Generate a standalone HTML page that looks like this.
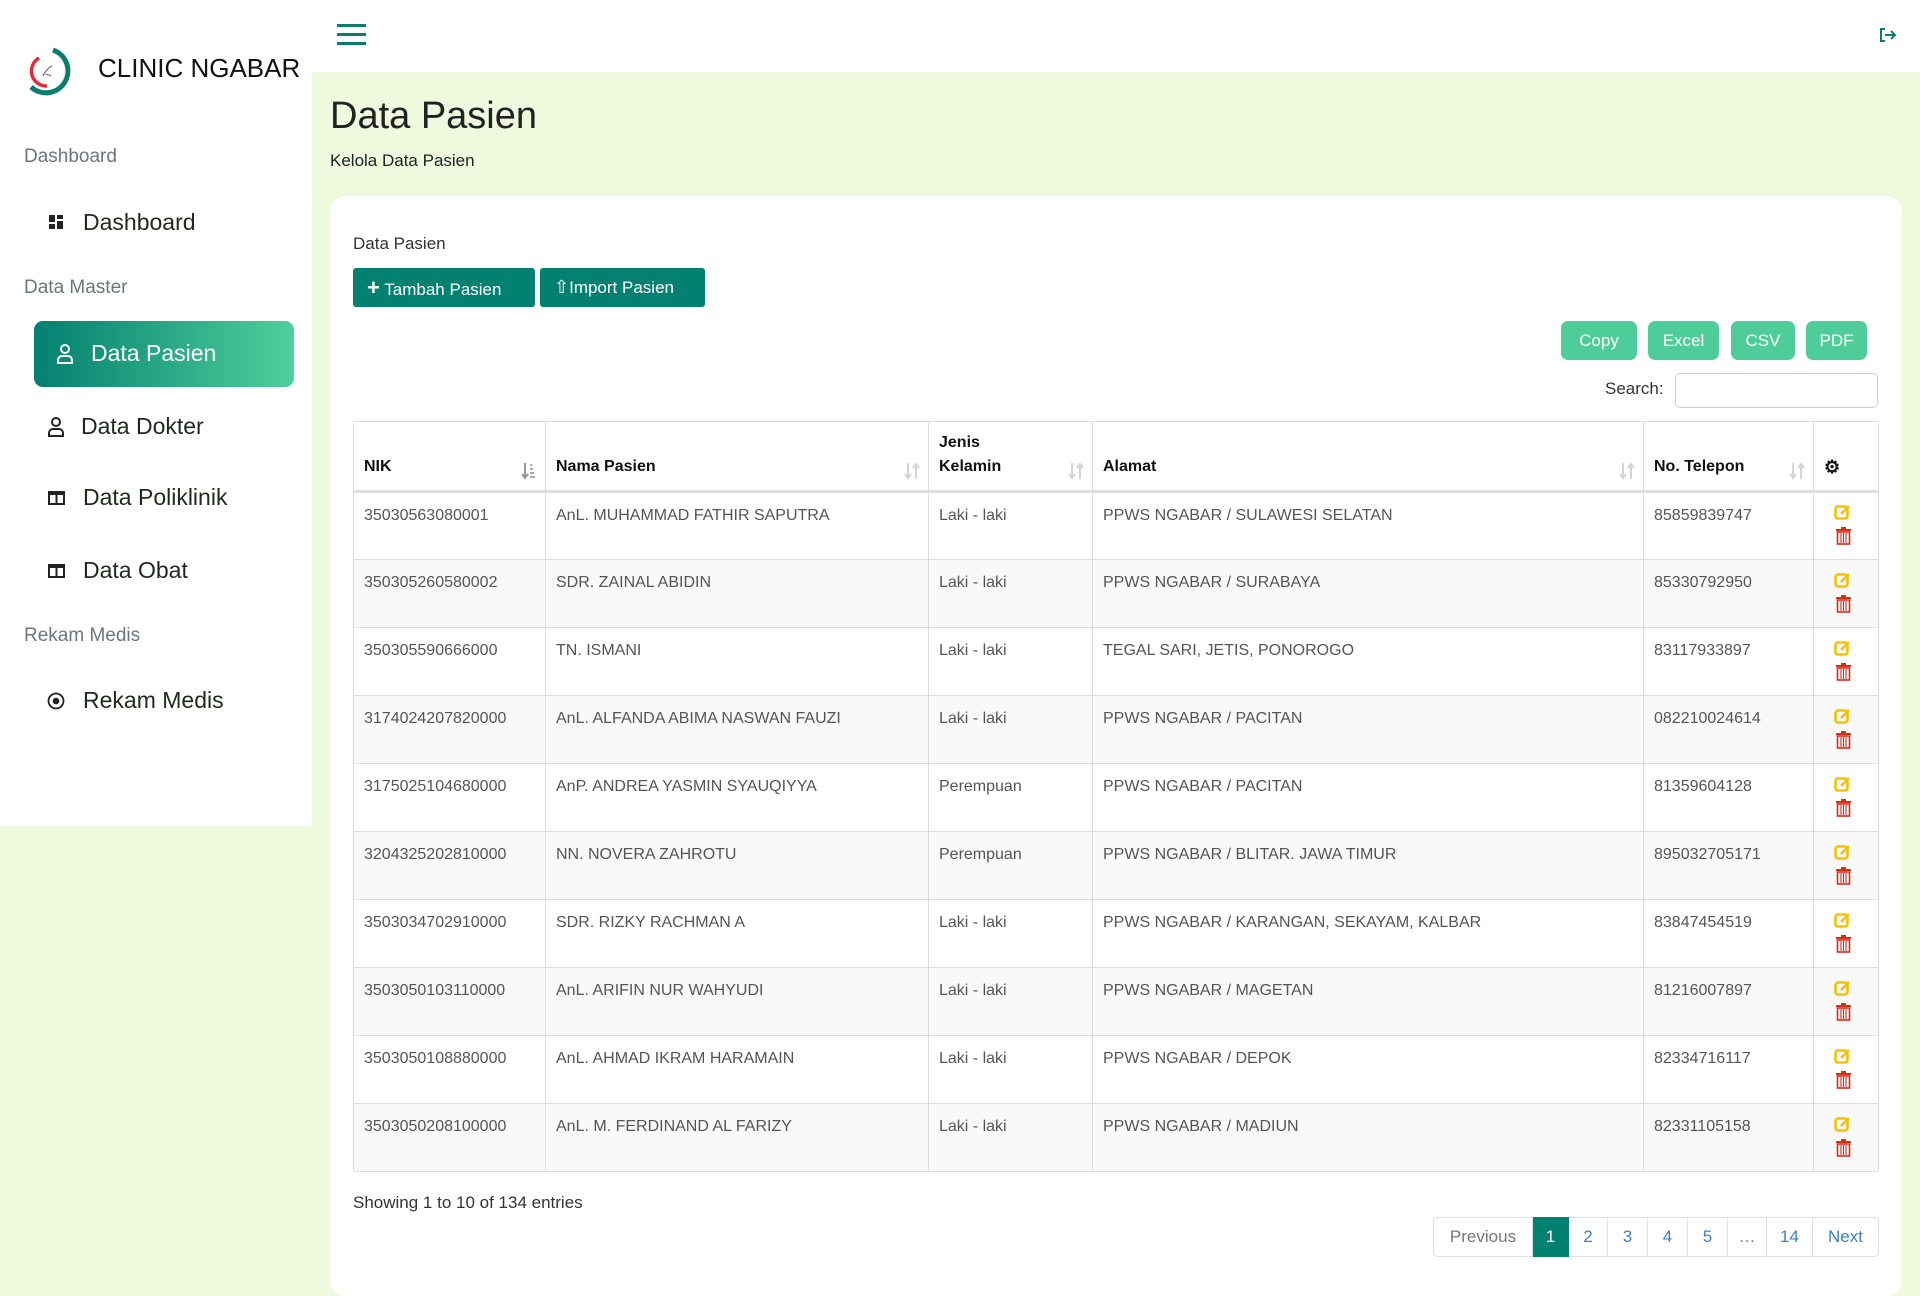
<!DOCTYPE html>
<html><head><meta charset="utf-8"><style>
*{box-sizing:border-box;margin:0;padding:0}
body{width:1920px;height:1290px;background:#eff9de;font-family:"Liberation Sans",sans-serif;position:relative;overflow:hidden;color:#212529}
.abs{position:absolute}
#top{left:0;top:0;width:1920px;height:72px;background:#fff}
#side{left:0;top:0;width:312px;height:826px;background:#fff}
.lbl{position:absolute;left:24px;font-size:19px;color:#6c757d}
.it{position:absolute;font-size:23px;color:#1d2a1d;white-space:nowrap}
.it svg{position:absolute;left:-36px;top:4px}
#card{left:330px;top:196px;width:1572px;height:1100px;background:#fff;border-radius:16px}
.btn{position:absolute;top:268px;height:39px;background:#028171;color:#fff;font-size:17px;border-radius:3px;line-height:39px;padding-left:14px}
.eb{position:absolute;top:321px;height:39px;background:#4ecd9a;color:#fff;font-size:17px;border-radius:7px;line-height:39px;text-align:center}
table{position:absolute;left:353px;top:421px;width:1525px;border-collapse:collapse;table-layout:fixed;font-size:16px}
th{height:70px;text-align:left;vertical-align:bottom;padding:0 10px 11px;font-weight:bold;border-right:1px solid #ddd;border-top:1px solid #ddd;border-bottom:3px solid #ddd;position:relative;color:#111;line-height:24px}
td{height:68px;vertical-align:top;padding:14px 10px 0;border-right:1px solid #ddd;border-bottom:1px solid #ddd;color:#555;white-space:nowrap}
tr:nth-child(odd) td{background:#f9f9f9}
td:first-child,th:first-child{border-left:1px solid #ddd}
.srt{position:absolute;right:8px;bottom:10px}
.pg{position:absolute;top:1217px;height:40px;border:1px solid #dee2e6;border-left:none;text-align:center;line-height:38px;font-size:17px;color:#3f7fbf}
</style></head><body>
<div id="top" class="abs"></div>
<div id="side" class="abs"></div>
<svg class="abs" style="left:21px;top:46px" width="50" height="50" viewBox="0 0 50 50"><path d="M32 4 A22 22 0 1 1 10 41" fill="none" stroke="#0b7d6e" stroke-width="5"/><path d="M18 12 A15 15 0 0 0 26 40" fill="none" stroke="#e22b36" stroke-width="3.5"/><path d="M22 30 q4-8 9-10 M25 28 l5 2" stroke="#666" stroke-width="1.2" fill="none"/></svg>
<div class="abs" style="left:98px;top:53px;font-size:26px;color:#111">CLINIC NGABAR</div>
<div class="lbl" style="top:146px">Dashboard</div>
<div class="it" style="left:83px;top:209px"><svg width="14" height="14" viewBox="0 0 14 14" style="left:-34px;top:6px"><rect x="0" y="0" width="6" height="7" fill="#222"/><rect x="8" y="0" width="6" height="4" fill="#222"/><rect x="0" y="9" width="6" height="5" fill="#222"/><rect x="8" y="6" width="6" height="8" fill="#222"/></svg>Dashboard</div>
<div class="lbl" style="top:277px">Data Master</div>
<div class="abs" style="left:34px;top:321px;width:260px;height:66px;border-radius:9px;background:linear-gradient(90deg,#038070,#4fcf9b)"></div>
<div class="it" style="left:91px;top:340px;color:#fff"><svg width="18" height="20" viewBox="0 0 18 20" style="left:-35px;top:4px"><circle cx="9" cy="5" r="4" fill="none" stroke="#fff" stroke-width="2"/><path d="M2 19v-3a4 4 0 0 1 4-4h6a4 4 0 0 1 4 4v3z" fill="none" stroke="#fff" stroke-width="2"/></svg>Data Pasien</div>
<div class="it" style="left:81px;top:413px"><svg width="18" height="20" viewBox="0 0 18 20" style="left:-34px;top:4px"><circle cx="9" cy="5" r="4" fill="none" stroke="#222" stroke-width="2"/><path d="M2 19v-3a4 4 0 0 1 4-4h6a4 4 0 0 1 4 4v3z" fill="none" stroke="#222" stroke-width="2"/></svg>Data Dokter</div>
<div class="it" style="left:83px;top:484px"><svg width="17" height="14" viewBox="0 0 17 14" style="left:-35px;top:7px"><rect x="1" y="1" width="15" height="12" fill="none" stroke="#222" stroke-width="2"/><rect x="1" y="1" width="15" height="3" fill="#222"/><line x1="8.5" y1="1" x2="8.5" y2="13" stroke="#222" stroke-width="2"/></svg>Data Poliklinik</div>
<div class="it" style="left:83px;top:557px"><svg width="17" height="14" viewBox="0 0 17 14" style="left:-35px;top:7px"><rect x="1" y="1" width="15" height="12" fill="none" stroke="#222" stroke-width="2"/><rect x="1" y="1" width="15" height="3" fill="#222"/><line x1="8.5" y1="1" x2="8.5" y2="13" stroke="#222" stroke-width="2"/></svg>Data Obat</div>
<div class="lbl" style="top:625px">Rekam Medis</div>
<div class="it" style="left:83px;top:687px"><svg width="18" height="18" viewBox="0 0 18 18" style="left:-36px;top:5px"><circle cx="9" cy="9" r="7.5" fill="none" stroke="#222" stroke-width="1.8"/><circle cx="9" cy="9" r="3.3" fill="#222"/></svg>Rekam Medis</div>
<svg class="abs" style="left:337px;top:24px" width="29" height="22"><rect y="0" width="29" height="3" fill="#0b7d6e"/><rect y="9" width="29" height="3" fill="#0b7d6e"/><rect y="18" width="29" height="3" fill="#0b7d6e"/></svg>
<svg class="abs" style="left:1879px;top:27px" width="18" height="16" viewBox="0 0 18 16"><path d="M6 2H2v12h4" fill="none" stroke="#0b7d6e" stroke-width="2"/><path d="M6 8h10M12 4l4 4-4 4" fill="none" stroke="#0b7d6e" stroke-width="2"/></svg>
<div class="abs" style="left:330px;top:95px;font-size:38px;color:#222">Data Pasien</div>
<div class="abs" style="left:330px;top:151px;font-size:17px;color:#222">Kelola Data Pasien</div>
<div id="card" class="abs"></div>
<div class="abs" style="left:353px;top:234px;font-size:17px;color:#333">Data Pasien</div>
<div class="btn" style="left:353px;width:182px"><b style="font-size:22px">+</b> Tambah Pasien</div>
<div class="btn" style="left:540px;width:165px"><span style="font-size:18px">⇧</span>Import Pasien</div>
<div class="eb" style="left:1561px;width:76px">Copy</div>
<div class="eb" style="left:1648px;width:71px">Excel</div>
<div class="eb" style="left:1731px;width:64px">CSV</div>
<div class="eb" style="left:1806px;width:61px">PDF</div>
<div class="abs" style="left:1605px;top:379px;font-size:17px;color:#333">Search:</div>
<div class="abs" style="left:1675px;top:373px;width:203px;height:35px;border:1px solid #ccc;border-radius:5px"></div>
<table>
<colgroup><col style="width:192px"><col style="width:383px"><col style="width:164px"><col style="width:551px"><col style="width:170px"><col style="width:65px"></colgroup>
<tr><th>NIK<svg class="srt" width="16" height="18" viewBox="0 0 16 18"><path d="M4 1v15M1 12l3 4 3-4" stroke="#999" stroke-width="2" fill="none"/><path d="M9 3h2M9 7h3M9 11h4M9 15h5" stroke="#aaa" stroke-width="2"/></svg></th><th>Nama Pasien<svg class="srt" width="16" height="18" viewBox="0 0 16 18"><path d="M4 1v15M1 12l3 4 3-4M12 17V2M9 6l3-4 3 4" stroke="#d4d4d4" stroke-width="2" fill="none"/></svg></th><th>Jenis<br>Kelamin<svg class="srt" width="16" height="18" viewBox="0 0 16 18"><path d="M4 1v15M1 12l3 4 3-4M12 17V2M9 6l3-4 3 4" stroke="#d4d4d4" stroke-width="2" fill="none"/></svg></th><th>Alamat<svg class="srt" width="16" height="18" viewBox="0 0 16 18"><path d="M4 1v15M1 12l3 4 3-4M12 17V2M9 6l3-4 3 4" stroke="#d4d4d4" stroke-width="2" fill="none"/></svg></th><th>No. Telepon<svg class="srt" width="16" height="18" viewBox="0 0 16 18"><path d="M4 1v15M1 12l3 4 3-4M12 17V2M9 6l3-4 3 4" stroke="#d4d4d4" stroke-width="2" fill="none"/></svg></th><th style="font-size:18px">⚙</th></tr>
<tr><td>35030563080001</td><td>AnL. MUHAMMAD FATHIR SAPUTRA</td><td>Laki - laki</td><td>PPWS NGABAR / SULAWESI SELATAN</td><td>85859839747</td><td></td></tr>
<tr><td>350305260580002</td><td>SDR. ZAINAL ABIDIN</td><td>Laki - laki</td><td>PPWS NGABAR / SURABAYA</td><td>85330792950</td><td></td></tr>
<tr><td>350305590666000</td><td>TN. ISMANI</td><td>Laki - laki</td><td>TEGAL SARI, JETIS, PONOROGO</td><td>83117933897</td><td></td></tr>
<tr><td>3174024207820000</td><td>AnL. ALFANDA ABIMA NASWAN FAUZI</td><td>Laki - laki</td><td>PPWS NGABAR / PACITAN</td><td>082210024614</td><td></td></tr>
<tr><td>3175025104680000</td><td>AnP. ANDREA YASMIN SYAUQIYYA</td><td>Perempuan</td><td>PPWS NGABAR / PACITAN</td><td>81359604128</td><td></td></tr>
<tr><td>3204325202810000</td><td>NN. NOVERA ZAHROTU</td><td>Perempuan</td><td>PPWS NGABAR / BLITAR. JAWA TIMUR</td><td>895032705171</td><td></td></tr>
<tr><td>3503034702910000</td><td>SDR. RIZKY RACHMAN A</td><td>Laki - laki</td><td>PPWS NGABAR / KARANGAN, SEKAYAM, KALBAR</td><td>83847454519</td><td></td></tr>
<tr><td>3503050103110000</td><td>AnL. ARIFIN NUR WAHYUDI</td><td>Laki - laki</td><td>PPWS NGABAR / MAGETAN</td><td>81216007897</td><td></td></tr>
<tr><td>3503050108880000</td><td>AnL. AHMAD IKRAM HARAMAIN</td><td>Laki - laki</td><td>PPWS NGABAR / DEPOK</td><td>82334716117</td><td></td></tr>
<tr><td>3503050208100000</td><td>AnL. M. FERDINAND AL FARIZY</td><td>Laki - laki</td><td>PPWS NGABAR / MADIUN</td><td>82331105158</td><td></td></tr>
</table>
<div id="icons"></div>
<script>
var h='';for(var i=0;i<10;i++){var t=491+68*i;
h+='<svg class="abs" style="left:1834px;top:'+(t+12)+'px" width="18" height="18" viewBox="0 0 18 18"><rect x="1.5" y="3.5" width="12" height="12" rx="2.5" fill="none" stroke="#f5c000" stroke-width="2.6"/><path d="M7 11l8-8" stroke="#f5c000" stroke-width="2.4"/></svg>';
h+='<svg class="abs" style="left:1836px;top:'+(t+36)+'px" width="15" height="18" viewBox="0 0 15 18"><rect x="0" y="2" width="15" height="2" fill="#d0311a"/><rect x="5" y="0" width="5" height="2" fill="#d0311a"/><rect x="1.5" y="5" width="12" height="12" fill="none" stroke="#d0311a" stroke-width="1.6"/><path d="M5 6v10M7.5 6v10M10 6v10" stroke="#d0311a" stroke-width="1.1"/></svg>';}
document.getElementById('icons').innerHTML=h;
</script>
<div class="abs" style="left:353px;top:1193px;font-size:17px;color:#333">Showing 1 to 10 of 134 entries</div>
<div class="pg" style="left:1433px;width:100px;border-left:1px solid #dee2e6;border-radius:4px 0 0 4px;color:#777">Previous</div>
<div class="pg" style="left:1533px;width:36px;background:#028171;color:#fff;border-color:#028171">1</div>
<div class="pg" style="left:1569px;width:39px">2</div>
<div class="pg" style="left:1608px;width:40px">3</div>
<div class="pg" style="left:1648px;width:40px">4</div>
<div class="pg" style="left:1688px;width:40px">5</div>
<div class="pg" style="left:1728px;width:39px;color:#777">…</div>
<div class="pg" style="left:1767px;width:46px">14</div>
<div class="pg" style="left:1813px;width:66px;border-radius:0 4px 4px 0">Next</div>
</body></html>
